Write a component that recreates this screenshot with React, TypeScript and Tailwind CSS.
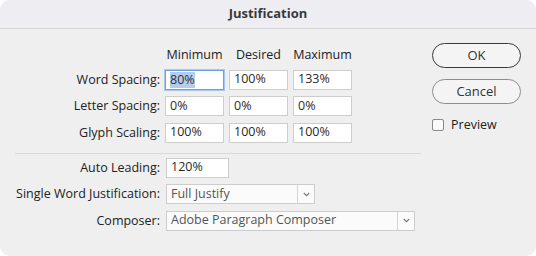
const font = { fontFamily: '"Open Sans", "Liberation Sans", sans-serif' };

function Field({ value, focused = false, w = "w-[59px]" }: { value: string; focused?: boolean; w?: string }) {
  return (
    <div
      className={`${w} h-[20px] flex items-center px-[4px] text-[12.5px] text-[#2a2a2a] bg-white ${
        focused ? "border border-[#6f9fe0] shadow-[0_0_0_1px_#a9c6ee]" : "border border-[#cdcdcd]"
      }`}
    >
      {focused ? <span className="bg-[#b3cdf1] text-[#333] leading-[16px]">{value}</span> : value}
    </div>
  );
}

function Select({ value, w }: { value: string; w: string }) {
  return (
    <div className={`${w} h-[20px] flex border border-[#cdcdcd] bg-[#fbfbfb] text-[12.5px] text-[#555]`}>
      <div className="flex-1 flex items-center px-[4px] whitespace-nowrap">{value}</div>
      <div className="w-[17px] flex items-center justify-center border-l border-[#d4d4d4]">
        <svg width="7" height="5" viewBox="0 0 7 5">
          <path d="M0.8 1 L3.5 3.7 L6.2 1" fill="none" stroke="#777" strokeWidth="1.1" />
        </svg>
      </div>
    </div>
  );
}

function Label({ children }: { children: string }) {
  return <div className="text-right text-[12.5px] text-[#222] leading-[20px] whitespace-nowrap">{children}</div>;
}

export default function App() {
  const rows = [
    { label: "Word Spacing:", values: ["80%", "100%", "133%"] },
    { label: "Letter Spacing:", values: ["0%", "0%", "0%"] },
    { label: "Glyph Scaling:", values: ["100%", "100%", "100%"] },
  ];

  return (
    <div className="w-[536px] h-[256px] bg-white" style={font}>
      <div className="w-[536px] h-[256px] rounded-[10px] overflow-hidden bg-[#efefef] flex flex-col">
        <div className="h-[29px] shrink-0 bg-[#eeeef2] border-b border-[#d6d6d8] flex items-center justify-center text-[13px] font-bold text-[#3a3a3a]">
          Justification
        </div>
        <div className="flex">
          <div className="w-[421px] pl-[15px] pt-[18px]">
            <div className="grid grid-cols-[145px_59px_59px_59px] gap-x-[5px] gap-y-[6.5px]">
              <div />
              <div className="text-center text-[12.5px] text-[#222] leading-[16px]">Minimum</div>
              <div className="text-center text-[12.5px] text-[#222] leading-[16px]">Desired</div>
              <div className="text-center text-[12.5px] text-[#222] leading-[16px]">Maximum</div>
              {rows.map((r, i) => (
                <div key={r.label} className="contents">
                  <Label>{r.label}</Label>
                  {r.values.map((v, j) => (
                    <Field key={j} value={v} focused={i === 0 && j === 0} />
                  ))}
                </div>
              ))}
            </div>
            <div className="mt-[10px] h-px bg-[#d9d9d9]" />
            <div className="mt-[4px] grid grid-cols-[145px_auto] gap-x-[6px] gap-y-[6.5px] justify-start">
              <Label>Auto Leading:</Label>
              <Field value="120%" w="w-[63px]" />
              <Label>Single Word Justification:</Label>
              <Select value="Full Justify" w="w-[149px]" />
              <Label>Composer:</Label>
              <Select value="Adobe Paragraph Composer" w="w-[249px]" />
            </div>
          </div>
          <div className="ml-[11px] w-[89px] pt-[14px] flex flex-col">
            <button className="h-[25px] rounded-full border-[1.5px] border-[#3a3a3a] bg-[#f4f4f4] text-[13px] text-[#333]">
              OK
            </button>
            <button className="mt-[11px] h-[25px] rounded-full border border-[#8c8c8c] bg-[#f4f4f4] text-[13px] text-[#333]">
              Cancel
            </button>
            <div className="mt-[12px] flex items-center gap-[7px]">
              <div className="w-[12px] h-[12px] border border-[#8a8a8a] rounded-[2px] bg-[#fafafa]" />
              <span className="text-[12.5px] text-[#222]">Preview</span>
            </div>
          </div>
        </div>
      </div>
    </div>
  );
}
